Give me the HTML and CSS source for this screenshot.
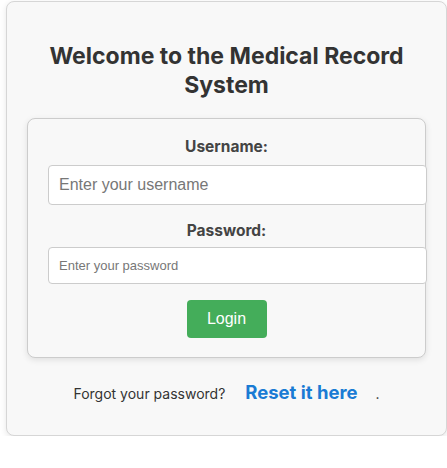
FILE: index.html
```html
<!DOCTYPE html>
<html>
<head>
<meta charset="utf-8">
<link rel="stylesheet" href="styles.css">
</head>
<body>
<div class="card">
  <h1 class="title">Welcome to the Medical Record System</h1>
  <form class="form">
    <label class="label" for="u">Username:</label>
    <input class="input input-user" id="u" type="text" placeholder="Enter your username">
    <label class="label label-pass" for="p">Password:</label>
    <input class="input input-pass" id="p" type="password" placeholder="Enter your password">
    <div class="actions"><button class="btn" type="button">Login</button></div>
  </form>
  <p class="forgot">Forgot your password? <a class="reset" href="#">Reset it here</a> .</p>
</div>
</body>
</html>
```
FILE: styles.css
```css
html, body { margin: 0; padding: 0; background: #fff; }
body { font-family: Inter, "Liberation Sans", sans-serif; color: #333; }
.card {
  margin: 1px 0 0 6px;
  width: 441px;
  height: 435px;
  box-sizing: border-box;
  background: #f8f8f8;
  border: 1px solid #d6d6d6;
  border-radius: 8px;
  box-shadow: 0 2px 6px rgba(0,0,0,0.1);
  padding: 40px 20px 0 20px;
}
.title {
  margin: 0;
  text-align: center;
  font-size: 23px;
  line-height: 29px;
  font-weight: 700;
  color: #333;
}
.form {
  margin-top: 18px;
  border: 1px solid #ccc;
  border-radius: 8px;
  background: #f8f8f8;
  box-shadow: 0 2px 6px rgba(0,0,0,0.1);
  padding: 18px 20px 19px;
  display: flex;
  flex-direction: column;
}
.label {
  text-align: center;
  font-weight: 700;
  font-size: 15.5px;
  line-height: 20px;
  color: #444;
  margin-bottom: 8px;
}
.label-pass { margin-bottom: 6px; }
.input {
  width: 100%;
  box-sizing: content-box;
  border: 1px solid #ccc;
  border-radius: 4px;
  background: #fff;
  font-family: "Liberation Sans", Arial, sans-serif;
  padding: 0 10px;
  color: #333;
}
.input::placeholder { color: #777; }
.input-user { height: 38px; font-size: 16px; margin-bottom: 16px; }
.input-pass { height: 35px; font-size: 13px; }
.actions { display: flex; justify-content: center; margin-top: 16px; }
.btn {
  width: 80px;
  height: 38px;
  border: none;
  border-radius: 4px;
  background: #44ad5a;
  color: #fff;
  font-family: "Liberation Sans", Arial, sans-serif;
  font-size: 16px;
}
.forgot {
  margin: 23px 0 0;
  text-align: center;
  font-size: 14px;
  color: #333;
}
.reset {
  color: #1a7bd4;
  font-weight: 700;
  font-size: 18.5px;
  text-decoration: none;
  margin: 0 14px 0 16px;
}
```
